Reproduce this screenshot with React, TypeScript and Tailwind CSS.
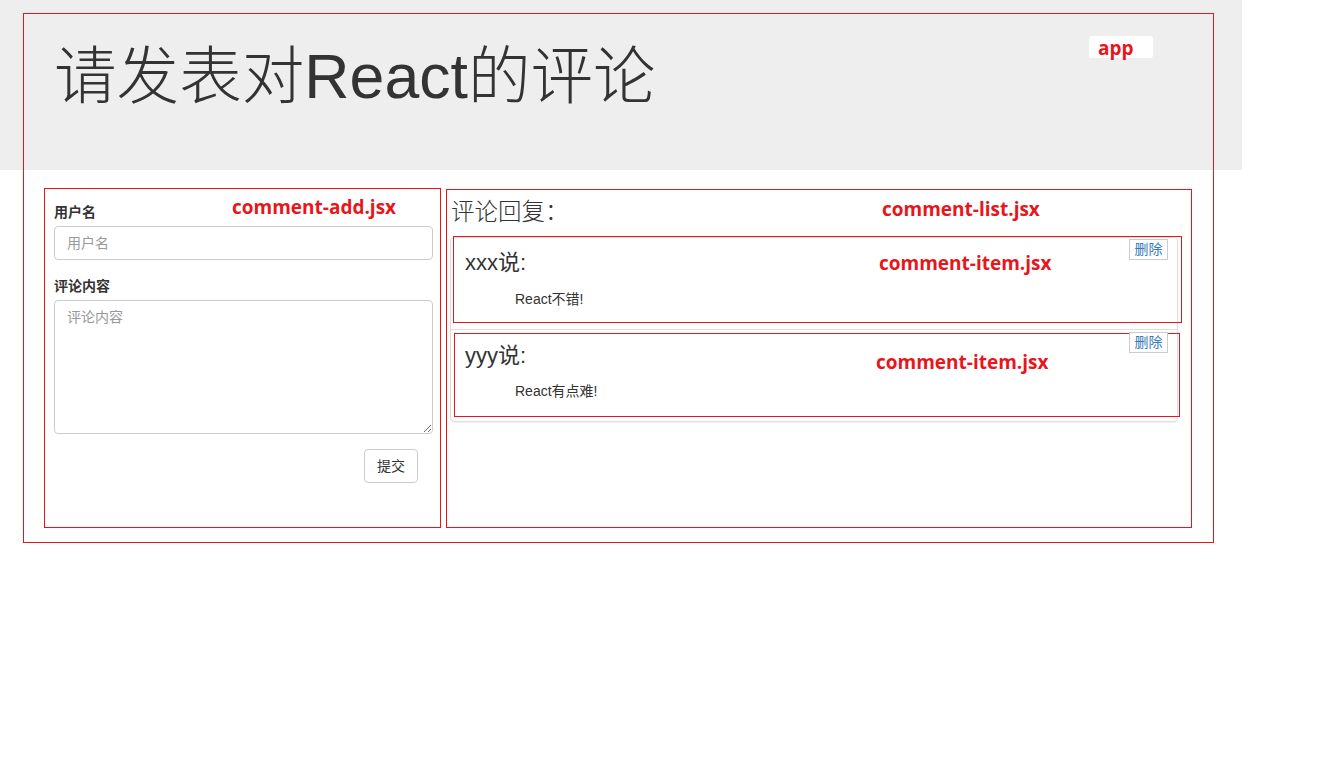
import React from "react";

type Comment = { username: string; content: string };

const comments: Comment[] = [
  { username: "xxx", content: "React不错!" },
  { username: "yyy", content: "React有点难!" },
];

const sans = "font-['Liberation_Sans','Noto_Sans_CJK_SC',sans-serif]";
const note =
  "pointer-events-none absolute font-['Open_Sans','Noto_Sans_CJK_SC',sans-serif] font-bold text-[19px] leading-[20px] text-[#e8161b]";

function CommentAdd() {
  return (
    <form
      className="relative h-[340px] w-[397px] border border-[#e8161b] pl-[9px] pt-[13px]"
      onSubmit={(e) => e.preventDefault()}
    >
      <span className={`left-[187px] top-[8px] ${note}`}>comment-add.jsx</span>
      <label className="block text-[14px] leading-[20px] font-bold text-[#333]">用户名</label>
      <input
        placeholder="用户名"
        className="mt-[4px] block h-[34px] w-[379px] rounded-[4px] border border-[#ccc] px-[12px] text-[14px] text-[#555] placeholder:text-[#999] outline-none"
      />
      <label className="mt-[16px] block text-[14px] leading-[20px] font-bold text-[#333]">评论内容</label>
      <textarea
        placeholder="评论内容"
        className="mt-[4px] block h-[134px] w-[379px] rounded-[4px] border border-[#ccc] px-[12px] py-[6px] text-[14px] text-[#555] placeholder:text-[#999] outline-none"
      />
      <div className="mt-[15px] flex w-[379px] justify-end pr-[15px]">
        <button
          type="submit"
          className="h-[34px] w-[54px] rounded-[4px] border border-[#ccc] bg-white text-[14px] text-[#333]"
        >
          提交
        </button>
      </div>
    </form>
  );
}

function CommentItem({ c, first }: { c: Comment; first: boolean }) {
  return (
    <li className={`flex flex-col ${first ? "h-[92px] border-b border-[#ddd]" : "h-[91px]"}`}>
      <div
        className={`relative shrink-0 border border-[#e8161b] ${
          first
            ? "-mt-[2px] ml-[2px] h-[87px] w-[729px] pl-[11px] pt-[13px]"
            : "ml-[3px] mt-[3px] h-[84px] w-[726px] pl-[10px] pt-[9px]"
        }`}
      >
        <span className={`${first ? "left-[425px] top-[16px]" : "left-[421px] top-[18px]"} ${note}`}>
          comment-item.jsx
        </span>
        <div className="flex items-start justify-between">
          <h4 className="text-[22px] leading-[26px] text-[#333]">{c.username}说:</h4>
          <button
            className={`-mt-[11px] h-[21px] w-[39px] border border-[#ccc] bg-white text-[14px] leading-[19px] text-[#337ab7] ${
              first ? "mr-[13px]" : "mr-[11px]"
            }`}
          >
            删除
          </button>
        </div>
        <p className={`pl-[50px] text-[14px] leading-[20px] text-[#333] ${first ? "mt-[13px]" : "mt-[12px]"}`}>
          {c.content}
        </p>
      </div>
    </li>
  );
}

function CommentList() {
  return (
    <div className="relative ml-[5px] mt-[1px] h-[339px] w-[746px] border border-[#e8161b] pl-[3px] pt-[6px]">
      <span className={`left-[435px] top-[9px] ${note}`}>comment-list.jsx</span>
      <h3 className="pl-[1px] text-[23.5px] leading-[32px] font-light text-[#333]">评论回复：</h3>
      <ul className="mt-[9px] w-[728px] rounded-[4px] border border-[#ddd] shadow-[0_1px_1px_rgba(0,0,0,0.05)]">
        {comments.map((c, i) => (
          <CommentItem key={c.username} c={c} first={i === 0} />
        ))}
      </ul>
    </div>
  );
}

export default function App() {
  return (
    <div className={`h-[761px] w-[1325px] overflow-hidden bg-white ${sans}`}>
      <div className="w-[1242px] bg-[linear-gradient(to_bottom,#eee_170px,#fff_170px)] pl-[23px] pt-[13px]">
        <div className="relative h-[530px] w-[1191px] border border-[#e8161b]">
          <div className="pointer-events-none absolute left-[1065px] top-[22px] h-[22px] w-[64px] rounded-[3px] bg-white" />
          <span className={`left-[1074px] top-[24px] ${note}`}>app</span>
          <h1 className="pl-[30px] pt-[28px] text-[62.6px] leading-[69px] font-light text-[#333]">
            请发表对React的评论
          </h1>
          <div className="mt-[77px] flex pl-[20px]">
            <CommentAdd />
            <CommentList />
          </div>
        </div>
      </div>
    </div>
  );
}
